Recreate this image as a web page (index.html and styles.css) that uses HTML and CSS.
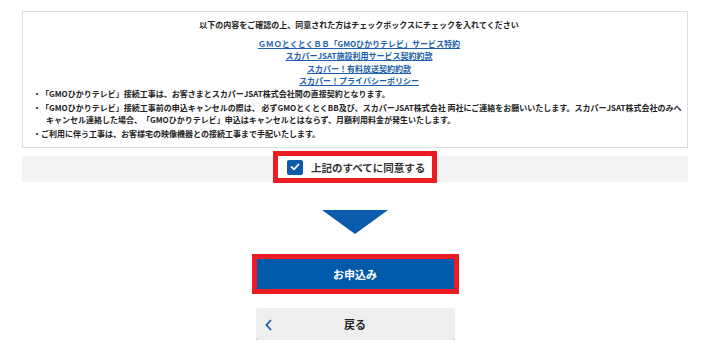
FILE: index.html
```html
<!DOCTYPE html>
<html lang="ja">
<head>
<meta charset="utf-8">
<link rel="stylesheet" href="styles.css">
</head>
<body>
<div class="page">
  <div class="terms">
    <p class="terms-title">以下の内容をご確認の上、同意された方はチェックボックスにチェックを入れてください</p>
    <ul class="links">
      <li><a href="#">ＧＭＯとくとくＢＢ「GMOひかりテレビ」サービス特約</a></li>
      <li><a href="#">スカパーJSAT施設利用サービス契約約款</a></li>
      <li><a href="#">スカパー！有料放送契約約款</a></li>
      <li><a href="#">スカパー！プライバシーポリシー</a></li>
    </ul>
    <ul class="notes">
      <li>「GMOひかりテレビ」接続工事は、お客さまとスカパーJSAT株式会社間の直接契約となります。</li>
      <li>「GMOひかりテレビ」接続工事前の申込キャンセルの際は、 必ずGMOとくとくBB及び、スカパーJSAT株式会社 両社にご連絡をお願いいたします。スカパーJSAT株式会社のみへキャンセル連絡した場合、「GMOひかりテレビ」申込はキャンセルとはならず、月額利用料金が発生いたします。</li>
      <li>ご利用に伴う工事は、お客様宅の映像機器との接続工事まで手配いたします。</li>
    </ul>
  </div>
  <div class="agree-band">
    <label class="agree">
      <span class="checkbox">
        <svg width="10" height="8" viewBox="0 0 10 8"><polyline points="1.5,4 4,6.3 8.5,1.5" fill="none" stroke="#fff" stroke-width="1.8" stroke-linecap="round" stroke-linejoin="round"/></svg>
      </span>
      <span class="agree-text">上記のすべてに同意する</span>
    </label>
  </div>
  <div class="arrow"></div>
  <button class="submit">お申込み</button>
  <button class="back">
    <svg class="chev" width="8" height="12" viewBox="0 0 8 12"><polyline points="6,1 1.5,6 6,11" fill="none" stroke="#1a5fae" stroke-width="1.8"/></svg>
    <span>戻る</span>
  </button>
</div>
</body>
</html>
```
FILE: styles.css
```css
* { box-sizing: border-box; }
html, body { margin: 0; padding: 0; background: #fff; }
body {
  font-family: "Noto Sans CJK JP", "Noto Sans", sans-serif;
  color: #222;
}
.page {
  width: 666px;
  margin: 11px 0 0 22px;
  display: flex;
  flex-direction: column;
  align-items: center;
}
.terms {
  width: 100%;
  border: 1px solid #dcdcdc;
  padding: 7px 2px 6px 10px;
  font-size: 8px;
  line-height: 12.6px;
  font-weight: 700;
}
.terms-title {
  margin: 0 0 6px;
  text-align: center;
  color: #222;
}
.links {
  list-style: none;
  margin: 0;
  padding: 0;
  text-align: center;
}
.links a {
  color: #1d5fae;
  text-decoration: underline;
  font-weight: 700;
}
.notes {
  list-style: none;
  margin: 0;
  padding: 0;
}
.notes li {
  padding-left: 13px;
  text-indent: -13px;
  margin-bottom: 1px;
}
.notes li::before {
  content: "・";
  display: inline-block;
  width: 8px;
  text-indent: 0;
}
.agree-band {
  width: 100%;
  height: 26px;
  margin-top: 8px;
  background: #f3f3f3;
  display: flex;
  justify-content: center;
  align-items: flex-start;
}
.agree {
  height: 22px;
  width: 154px;
  background: #fff;
  outline: 5px solid #ec1c24;
  display: flex;
  align-items: center;
  padding-left: 9px;
  gap: 8px;
}
.checkbox {
  width: 16px;
  height: 15px;
  border-radius: 2px;
  background: #0d5aa9;
  display: flex;
  align-items: center;
  justify-content: center;
}
.agree-text {
  font-size: 10.5px;
  font-weight: 700;
  color: #333;
  white-space: nowrap;
}
.arrow {
  width: 0;
  height: 0;
  margin-top: 28px;
  border-left: 33px solid transparent;
  border-right: 33px solid transparent;
  border-top: 24px solid #0b5cad;
}
.submit {
  margin-top: 25px;
  width: 197px;
  height: 30px;
  border: 0;
  outline: 5px solid #ec1c24;
  background: #0059aa;
  color: #fff;
  font-family: inherit;
  font-size: 11px;
  font-weight: 700;
}
.back {
  margin-top: 19px;
  width: 199px;
  height: 32px;
  border: 0;
  border-radius: 3px;
  background: #eeeeee;
  box-shadow: 0 1px 0 #b4b4b4;
  font-family: inherit;
  font-size: 11px;
  font-weight: 700;
  color: #222;
  display: flex;
  align-items: center;
  justify-content: center;
  position: relative;
}
.chev {
  position: absolute;
  left: 9px;
  top: 11px;
}
```
